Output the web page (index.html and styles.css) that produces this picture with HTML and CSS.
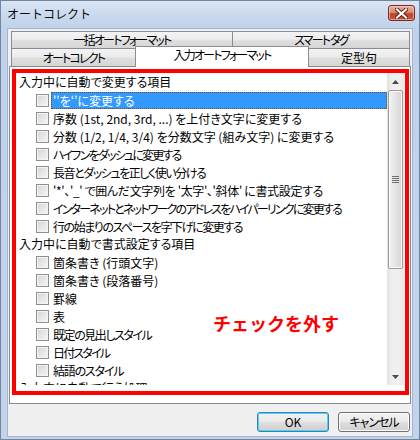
FILE: index.html
```html
<!DOCTYPE html>
<html lang="ja">
<head>
<meta charset="utf-8">
<title>オートコレクト</title>
<link rel="stylesheet" href="styles.css">
</head>
<body>
<div class="window">
  <div class="titlebar">
    <span class="title">オートコレクト</span>
    <span class="close">
      <svg width="13" height="11" viewBox="0 0 13 11">
        <path d="M2 1.5 L11 9.5 M11 1.5 L2 9.5" stroke="#5a1a10" stroke-width="4" stroke-linecap="square"/>
        <path d="M2 1.5 L11 9.5 M11 1.5 L2 9.5" stroke="#ffffff" stroke-width="2.2" stroke-linecap="square"/>
      </svg>
    </span>
  </div>
  <div class="client">
    <div class="tabs">
      <div class="tabrow">
        <div class="tab t-ikkatsu">一括オートフォーマット</div>
        <div class="tab t-smart">スマート タグ</div>
      </div>
      <div class="tabrow">
        <div class="tab t-auto">オートコレクト</div>
        <div class="tab t-input selected">入力オートフォーマット</div>
        <div class="tab t-teikei">定型句</div>
      </div>
    </div>
    <div class="panel">
      <div class="redbox">
        <div class="listbox">
          <div class="items">
            <div class="group">入力中に自動で変更する項目</div>
            <div class="item"><span class="cb"></span><span class="label sel">''を‘’に変更する</span></div>
            <div class="item"><span class="cb"></span><span class="label">序数 (1st, 2nd, 3rd, ...) を上付き文字に変更する</span></div>
            <div class="item"><span class="cb"></span><span class="label">分数 (1/2, 1/4, 3/4) を分数文字 (組み文字) に変更する</span></div>
            <div class="item"><span class="cb"></span><span class="label kana2">ハイフンをダッシュに変更する</span></div>
            <div class="item"><span class="cb"></span><span class="label kana15">長音とダッシュを正しく使い分ける</span></div>
            <div class="item"><span class="cb"></span><span class="label kana1">'*'、'_' で囲んだ文字列を '太字'、'斜体' に書式設定する</span></div>
            <div class="item"><span class="cb"></span><span class="label kana3">インターネットとネットワークのアドレスをハイパーリンクに変更する</span></div>
            <div class="item"><span class="cb"></span><span class="label kana15">行の始まりのスペースを字下げに変更する</span></div>
            <div class="group">入力中に自動で書式設定する項目</div>
            <div class="item"><span class="cb"></span><span class="label">箇条書き (行頭文字)</span></div>
            <div class="item"><span class="cb"></span><span class="label">箇条書き (段落番号)</span></div>
            <div class="item"><span class="cb"></span><span class="label">罫線</span></div>
            <div class="item"><span class="cb"></span><span class="label">表</span></div>
            <div class="item"><span class="cb"></span><span class="label kana15">既定の見出しスタイル</span></div>
            <div class="item"><span class="cb"></span><span class="label kana2">日付スタイル</span></div>
            <div class="item"><span class="cb"></span><span class="label kana12">結語のスタイル</span></div>
            <div class="group">入力中に自動で行う処理</div>
          </div>
          <div class="scrollbar">
            <div class="arrow">
              <svg width="7" height="4" viewBox="0 0 7 4"><path d="M0 4 L3.5 0 L7 4 Z" fill="#4a4a4a"/></svg>
            </div>
            <div class="thumb">
              <span class="grip"></span><span class="grip"></span><span class="grip"></span><span class="grip"></span>
            </div>
            <div class="track"></div>
            <div class="arrow">
              <svg width="7" height="4" viewBox="0 0 7 4"><path d="M0 0 L7 0 L3.5 4 Z" fill="#4a4a4a"/></svg>
            </div>
          </div>
        </div>
        <div class="note">チェックを外す</div>
      </div>
    </div>
    <div class="buttons">
      <button class="btn default">OK</button>
      <button class="btn kana-btn">キャンセル</button>
    </div>
  </div>
</div>
</body>
</html>
```

FILE: styles.css
```css
* {
  box-sizing: border-box;
}

html, body {
  margin: 0;
  padding: 0;
  background: #c4d5ea;
}

body {
  font-family: "Noto Sans CJK JP", "Noto Sans", sans-serif;
  font-size: 12px;
  color: #000;
}

.window {
  width: 420px;
  height: 440px;
  border: 1px solid #6f86a3;
  background: linear-gradient(#dbe6f4 0px, #c9d9ee 14px, #c0d2ea 28px, #c3d4ea 100%);
  padding: 0 6px 2px 6px;
  display: flex;
  flex-direction: column;
}

.titlebar {
  height: 27px;
  display: flex;
  align-items: flex-start;
  margin: 0 -6px;
  padding: 0 4px 0 6px;
}

.title {
  font-size: 12px;
  line-height: 16px;
  margin-top: 5px;
  color: #0b0b0b;
}

.close {
  margin-left: auto;
  margin-top: 4px;
  width: 27px;
  height: 16px;
  border: 1px solid #7a2a1c;
  border-radius: 3px;
  background: linear-gradient(#eab2a3 0%, #d88a76 45%, #c2432c 55%, #c9563f 100%);
  box-shadow: inset 0 0 0 1px rgba(255, 220, 210, 0.55);
  display: flex;
  align-items: center;
  justify-content: center;
}

.client {
  flex: 1;
  background: #f0f0f0;
  border: 1px solid #a3b6cf;
  padding: 2px 1px 0 1px;
  display: flex;
  flex-direction: column;
}

.tabs {
  margin: 0 2px 0 2px;
  display: flex;
  flex-direction: column;
}

.tabrow {
  display: flex;
  align-items: flex-end;
}

.tabrow:first-child {
  height: 17px;
}

.tabrow:last-child {
  height: 18px;
}

.tab {
  border: 1px solid #898c95;
  border-bottom: none;
  background: linear-gradient(#f3f3f3 0%, #ececec 45%, #dedede 55%, #d6d6d6 100%);
  font-size: 12px;
  line-height: 16px;
  text-align: center;
  font-feature-settings: "palt";
  letter-spacing: -1.8px;
  white-space: nowrap;
  flex: none;
}

.tabrow:first-child .tab {
  height: 17px;
  line-height: 16px;
}

.tabrow:last-child .tab {
  height: 18px;
  line-height: 18px;
}

.tab + .tab {
  margin-left: -1px;
}

.t-ikkatsu { width: 222px; }
.t-smart { width: 178px; }
.t-auto { width: 125px; }
.t-input { width: 174px; }
.t-teikei { width: 102px; letter-spacing: 0; }

.tabrow:last-child .tab.selected {
  height: 21px;
  margin-bottom: -1px;
  background: #ffffff;
  line-height: 16px;
  position: relative;
  z-index: 2;
}

.panel {
  height: 338px;
  border: 1px solid #898c95;
  background: #ffffff;
  padding: 2px 1px 0 2px;
}

.redbox {
  position: relative;
  width: 397px;
  height: 326px;
  border: 4px solid #ff0000;
  background: #ffffff;
}

.listbox {
  height: 312px;
  display: flex;
  padding-right: 1px;
}

.items {
  flex: 1;
  overflow: hidden;
  padding-left: 3px;
  font-feature-settings: "palt";
}

.group {
  height: 18px;
  line-height: 18px;
  white-space: nowrap;
}

.item {
  height: 18px;
  display: flex;
  align-items: center;
  padding-left: 17px;
  white-space: nowrap;
}

.cb {
  flex: none;
  width: 13px;
  height: 13px;
  border: 1px solid #8e8f8f;
  background: linear-gradient(135deg, #d4d4d4 0%, #e6e6e6 50%, #f7f7f7 100%);
  box-shadow: inset 0 0 0 1px #f4f4f4;
  margin-right: 2px;
}

.label {
  height: 17px;
  line-height: 16px;
  padding: 0 2px 0 1px;
  border: 1px solid transparent;
}

.kana1 { letter-spacing: -0.35px; }
.kana12 { letter-spacing: -1.2px; }
.kana15 { letter-spacing: -1.45px; }
.kana2 { letter-spacing: -1.8px; }
.kana3 { letter-spacing: -1.8px; }

.label.sel {
  flex: 1;
  background: #3399ff;
  color: #ffffff;
  border: 1px dotted #7a4a10;
}

.scrollbar {
  width: 17px;
  flex: none;
  display: flex;
  flex-direction: column;
  background: linear-gradient(90deg, #e2e2e2 0%, #f0f0f0 30%, #f0f0f0 70%, #e6e6e6 100%);
}

.arrow {
  height: 17px;
  display: flex;
  align-items: center;
  justify-content: center;
  flex: none;
}

.thumb {
  height: 179px;
  margin: 0 1px;
  border: 1px solid #9b9b9b;
  border-radius: 2px;
  background: linear-gradient(90deg, #f4f4f4 0%, #e6e6e6 45%, #d4d4d4 100%);
  box-shadow: inset 0 0 0 1px #fafafa;
  display: flex;
  flex-direction: column;
  align-items: center;
  justify-content: center;
  gap: 1px;
  flex: none;
}

.grip {
  width: 7px;
  height: 1px;
  background: #6f6f6f;
}

.track {
  flex: 1;
}

.note {
  position: absolute;
  left: 197px;
  top: 240px;
  color: #ff0000;
  font-size: 18px;
  font-weight: bold;
  line-height: 20px;
  white-space: nowrap;
}

.buttons {
  display: flex;
  justify-content: flex-end;
  gap: 9px;
  margin-top: 8px;
  padding-right: 1px;
}

.btn {
  width: 72px;
  height: 20px;
  padding: 0;
  border: 1px solid #707070;
  border-radius: 3px;
  background: linear-gradient(#f2f2f2 0%, #ebebeb 45%, #dddddd 55%, #cfcfcf 100%);
  box-shadow: inset 0 0 0 1px #fcfcfc;
  font-family: "Noto Sans CJK JP", "Noto Sans", sans-serif;
  font-size: 12px;
  line-height: 16px;
  color: #000;
  font-feature-settings: "palt";
}

.kana-btn {
  letter-spacing: -1px;
}

.btn.default {
  border-color: #3c7fb1;
  box-shadow: inset 0 0 0 1px #48d6f8;
}
```
